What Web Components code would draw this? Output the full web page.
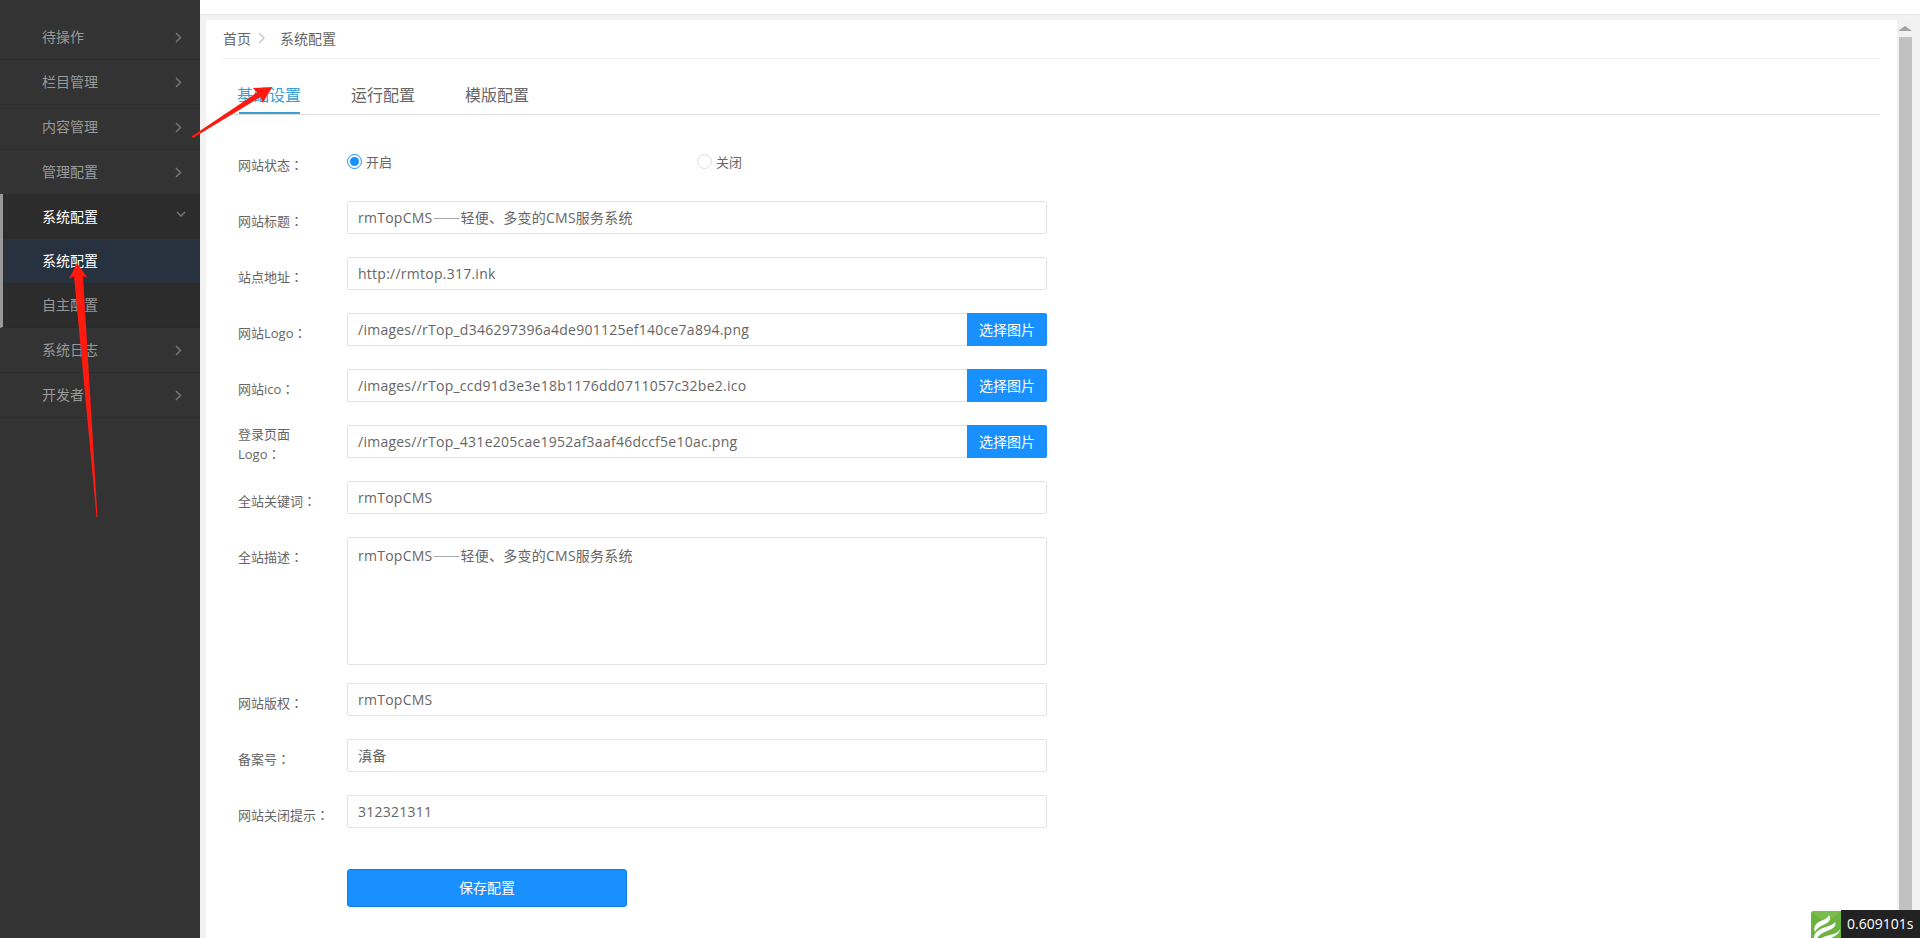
<!DOCTYPE html>
<html lang="zh-CN">
<head>
<meta charset="utf-8">
<title>系统配置</title>
<style>
    html, body { margin: 0; height: 100%; overflow: hidden; background: #f2f2f2; }
    body { font-family: "Open Sans", "Noto Sans CJK SC", sans-serif; color: #666; }
</style>
</head>
<body>
<app-shell>
    <side-nav slot="nav">
        <nav-item label="待操作" chevron="right"></nav-item>
        <nav-item label="栏目管理" chevron="right"></nav-item>
        <nav-item label="内容管理" chevron="right"></nav-item>
        <nav-item label="管理配置" chevron="right"></nav-item>
        <nav-group>
            <nav-item label="系统配置" chevron="down" state="open"></nav-item>
            <nav-item label="系统配置" state="selected"></nav-item>
            <nav-item label="自主配置" state="sub"></nav-item>
        </nav-group>
        <nav-item label="系统日志" chevron="right"></nav-item>
        <nav-item label="开发者" chevron="right"></nav-item>
    </side-nav>

    <config-card>
        <bread-crumb slot="crumb" first="首页" current="系统配置"></bread-crumb>
        <tab-bar slot="tabs" tabs="基础设置,运行配置,模版配置" active="0"></tab-bar>

        <form-row label="网站状态：" kind="radio">
            <radio-option checked>开启</radio-option>
            <radio-option>关闭</radio-option>
        </form-row>
        <form-row label="网站标题："><text-field value="rmTopCMS——轻便、多变的CMS服务系统"></text-field></form-row>
        <form-row label="站点地址："><text-field value="http://rmtop.317.ink"></text-field></form-row>
        <form-row label="网站Logo："><text-field value="/images//rTop_d346297396a4de901125ef140ce7a894.png" action="选择图片"></text-field></form-row>
        <form-row label="网站ico："><text-field value="/images//rTop_ccd91d3e3e18b1176dd0711057c32be2.ico" action="选择图片"></text-field></form-row>
        <form-row label="登录页面|Logo：" kind="wrapped"><text-field value="/images//rTop_431e205cae1952af3aaf46dccf5e10ac.png" action="选择图片"></text-field></form-row>
        <form-row label="全站关键词："><text-field value="rmTopCMS"></text-field></form-row>
        <form-row label="全站描述：" kind="area"><text-field multiline value="rmTopCMS——轻便、多变的CMS服务系统"></text-field></form-row>
        <form-row label="网站版权："><text-field value="rmTopCMS"></text-field></form-row>
        <form-row label="备案号："><text-field value="滇备"></text-field></form-row>
        <form-row label="网站关闭提示："><text-field value="312321311"></text-field></form-row>
        <form-row kind="submit"><save-button>保存配置</save-button></form-row>
    </config-card>
</app-shell>
<annotation-arrows></annotation-arrows>
<timing-badge>0.609101s</timing-badge>

<script>
class AppShell extends HTMLElement {
    constructor() {
        super();
        this.attachShadow({ mode: "open" });
        this.shadowRoot.innerHTML = `
            <style>
                :host { display: flex; width: 1920px; height: 938px; overflow: hidden; }
                .main { flex: 1; min-width: 0; display: flex; flex-direction: column; }
                .top { height: 14px; flex: none; background: #fff; box-shadow: 0 1px 2px rgba(0,0,0,.05); }
                .body { flex: 1; min-height: 0; display: flex; padding: 6px 0 0 6px; }
                .track { flex: none; width: 16px; margin-right: 7px; background: #f1f1f1; display: flex; flex-direction: column; align-items: center; }
                .arrow { flex: none; height: 17px; display: flex; align-items: center; justify-content: center; }
                .arrow i { display: block; width: 0; height: 0; border: 4px solid transparent; border-top: 0; border-left-width: 7px; border-right-width: 7px; border-bottom: 5px solid #a3a3a3; }
                .thumb { flex: 1; width: 13px; margin-left: 1px; background: #c1c1c1; }
            </style>
            <slot name="nav"></slot>
            <div class="main">
                <div class="top"></div>
                <div class="body">
                    <slot></slot>
                    <div class="track"><div class="arrow"><i></i></div><div class="thumb"></div></div>
                </div>
            </div>
        `;
    }
}

class SideNav extends HTMLElement {
    constructor() {
        super();
        this.attachShadow({ mode: "open" });
        this.shadowRoot.innerHTML = `
            <style>
                :host { display: block; flex: none; width: 200px; height: 100%; box-sizing: border-box; padding-top: 15px; background: #333; }
            </style>
            <slot></slot>
        `;
    }
}

class NavGroup extends HTMLElement {
    constructor() {
        super();
        this.attachShadow({ mode: "open" });
        this.shadowRoot.innerHTML = `
            <style>
                :host { display: block; margin-top: -1px; border-left: 3px solid #999; border-bottom: 1px solid #2a2a2a; background: #2c2c2c; }
            </style>
            <slot></slot>
        `;
    }
}

class NavItem extends HTMLElement {
    constructor() {
        super();
        this.attachShadow({ mode: "open" });
    }

    connectedCallback() {
        var state = this.getAttribute("state") || "";
        var chevron = this.getAttribute("chevron");
        var down = chevron === "down";
        var icon = chevron
            ? `<svg width="${down ? 10 : 7}" height="${down ? 6 : 11}" ${down ? 'style="margin-bottom:5px"' : ""} fill="none" stroke="#727272" stroke-width="1.6"><polyline points="${down ? "1,1 5,5 9,1" : "1,1 5.5,5.5 1,10"}"/></svg>`
            : "";
        var grouped = state !== "";
        this.shadowRoot.innerHTML = `
            <style>
                :host { display: block; }
                .row {
                    display: flex; align-items: center; justify-content: space-between;
                    box-sizing: border-box; height: ${grouped && !down ? 44 : 45}px;
                    padding: 0 ${down ? 14 : 18}px 0 ${grouped ? 39 : 42}px;
                    font-size: 14px; color: ${state === "open" || state === "selected" ? "#fff" : "#999"};
                    border-bottom: ${grouped ? 0 : 1}px solid #2d2d2d;
                    background: ${state === "selected" ? "#28323e" : "transparent"};
                }
                span { margin-bottom: 2px; }
            </style>
            <div class="row"><span>${this.getAttribute("label")}</span>${icon}</div>
        `;
    }
}

class ConfigCard extends HTMLElement {
    constructor() {
        super();
        this.attachShadow({ mode: "open" });
        this.shadowRoot.innerHTML = `
            <style>
                :host { display: block; flex: 1; min-width: 0; box-sizing: border-box; padding: 0 17px; background: #fff; border-radius: 3px 0 0 0; }
                .form { padding: 26px 0 0 15px; }
            </style>
            <slot name="crumb"></slot>
            <slot name="tabs"></slot>
            <div class="form"><slot></slot></div>
        `;
    }
}

class BreadCrumb extends HTMLElement {
    constructor() {
        super();
        this.attachShadow({ mode: "open" });
    }

    connectedCallback() {
        this.shadowRoot.innerHTML = `
            <style>
                :host { display: flex; align-items: center; box-sizing: border-box; height: 39px; padding-bottom: 3px; font-size: 14px; color: #666; border-bottom: 1px solid #eee; }
                svg { margin: 0 15px 0 7px; }
            </style>
            <span>${this.getAttribute("first")}</span>
            <svg width="7" height="12" fill="none" stroke="#c8c8c8" stroke-width="1.4"><polyline points="1,1 6,6 1,11"/></svg>
            <span>${this.getAttribute("current")}</span>
        `;
    }
}

class TabBar extends HTMLElement {
    constructor() {
        super();
        this.attachShadow({ mode: "open" });
    }

    connectedCallback() {
        var active = Number(this.getAttribute("active"));
        var tabs = this.getAttribute("tabs").split(",").map(function (name, index) {
            return `<div class="tab${index === active ? " on" : ""}">${name}</div>`;
        });
        this.shadowRoot.innerHTML = `
            <style>
                :host { display: flex; box-sizing: border-box; height: 56px; padding: 18px 0 0 14px; border-bottom: 1px solid #ddd; }
                .tab { margin-right: 50px; width: 64px; height: 37px; line-height: 36px; font-size: 16px; color: #666; }
                .on { color: #3b9fd1; background: linear-gradient(#3b9fd1, #3b9fd1) no-repeat center bottom / 61px 2px; }
            </style>
            ${tabs.join("")}
        `;
    }
}

class FormRow extends HTMLElement {
    constructor() {
        super();
        this.attachShadow({ mode: "open" });
    }

    connectedCallback() {
        var kind = this.getAttribute("kind") || "text";
        var label = this.getAttribute("label") || "";
        var top = { text: 10, radio: 14, wrapped: 0, area: 10, submit: 0 }[kind];
        var bottom = { text: 23, radio: 22, wrapped: 23, area: 18, submit: 0 }[kind];
        // the colon sits centred in its cell in the original, the TC face draws it that way
        var lines = label.split("|").map(function (line) {
            return "<div>" + line.replace("：", '<span class="colon" lang="zh-TW">：</span>') + "</div>";
        });
        this.shadowRoot.innerHTML = `
            <style>
                :host { display: flex; margin-bottom: ${bottom}px; ${kind === "submit" ? "margin-top: 41px;" : ""} }
                .label { flex: none; box-sizing: border-box; width: 109px; height: 33px; padding-top: ${top}px; font-size: 13px; line-height: 19px; color: #666; white-space: nowrap; }
                .colon { font-family: "Noto Sans CJK TC", sans-serif; }
                .control { display: flex; width: 700px; ${kind === "radio" ? "height: 36px; align-items: center; padding-top: 2px;" : ""} }
            </style>
            <div class="label">${lines.join("")}</div>
            <div class="control"><slot></slot></div>
        `;
    }
}

class TextField extends HTMLElement {
    constructor() {
        super();
        this.attachShadow({ mode: "open" });
    }

    connectedCallback() {
        var value = this.getAttribute("value").replace("——", '<span class="dash">——</span>');
        var action = this.getAttribute("action");
        var multiline = this.hasAttribute("multiline");
        this.shadowRoot.innerHTML = `
            <style>
                :host { display: flex; flex: 1; min-width: 0; font-size: 14px; color: #666; }
                .box {
                    flex: 1; min-width: 0; box-sizing: border-box; height: ${multiline ? 128 : 33}px;
                    padding: ${multiline ? "6px" : "0"} 10px; line-height: ${multiline ? "22px" : "31px"};
                    border: 1px solid #e2e2e2; border-radius: ${action ? "2px 0 0 2px" : "2px"};
                    ${action ? "border-right: 0;" : ""} white-space: nowrap; letter-spacing: .25px;
                }
                .dash { font-family: "Noto Sans CJK SC", sans-serif; letter-spacing: 0; }
                .btn {
                    flex: none; width: 80px; height: 33px; line-height: 33px; text-align: center;
                    font-size: 14px; color: #fff; background: #1890ff; border-radius: 0 2px 2px 0;
                }
            </style>
            <div class="box">${value}</div>
            ${action ? `<div class="btn">${action}</div>` : ""}
        `;
    }
}

class RadioOption extends HTMLElement {
    constructor() {
        super();
        this.attachShadow({ mode: "open" });
    }

    connectedCallback() {
        var checked = this.hasAttribute("checked");
        this.shadowRoot.innerHTML = `
            <style>
                :host { display: flex; align-items: center; flex: none; width: 350px; font-size: 13px; color: #666; }
                .dot { box-sizing: border-box; width: 15px; height: 15px; margin-right: 4px; border-radius: 50%; border: 1px solid ${checked ? "#1890ff" : "#ddd"}; padding: 2px; }
                .dot i { display: block; width: 9px; height: 9px; border-radius: 50%; background: ${checked ? "#1890ff" : "transparent"}; }
            </style>
            <span class="dot"><i></i></span><slot></slot>
        `;
    }
}

class SaveButton extends HTMLElement {
    constructor() {
        super();
        this.attachShadow({ mode: "open" });
        this.shadowRoot.innerHTML = `
            <style>
                :host { display: block; box-sizing: border-box; width: 280px; height: 38px; line-height: 36px; text-align: center; font-size: 14px; color: #fff; background: #1890ff; border: 1px solid #0f7fe6; border-radius: 3px; }
            </style>
            <slot></slot>
        `;
    }
}

class AnnotationArrows extends HTMLElement {
    constructor() {
        super();
        this.attachShadow({ mode: "open" });
        this.shadowRoot.innerHTML = `
            <style>
                :host { position: absolute; left: 0; top: 0; width: 300px; height: 530px; pointer-events: none; }
            </style>
            <svg width="300" height="530" fill="#ff1a10">
                <polygon points="191.5,136.5 257,92.5 253,88 272.5,87 262.5,103 260.5,97 193,138"/>
                <polygon points="77,263 87.5,278 83,276 97.5,517 96.5,517 74,276 69,279"/>
            </svg>
        `;
    }
}

class TimingBadge extends HTMLElement {
    constructor() {
        super();
        this.attachShadow({ mode: "open" });
        this.shadowRoot.innerHTML = `
            <style>
                :host { position: absolute; right: 0; bottom: 0; display: flex; align-items: flex-end; height: 28px; font-size: 14px; color: #fff; }
                .logo { width: 30px; height: 27px; border-radius: 3px 0 0 0; }
                .time { box-sizing: border-box; width: 79px; height: 28px; line-height: 27px; padding-left: 6px; background: #222; font-family: "Open Sans", sans-serif; }
            </style>
            <svg class="logo" viewBox="0 0 30 27">
                <rect width="30" height="27" fill="#6db33f"/>
                <polygon points="0,0 15,13 30,0" fill="#79bd4c"/>
                <path fill="#fff" d="M18 4C21 9 17 12 12 14C8 16 5 18 4 21C2 16 5 12 10 10C14 8 17 7 18 4Z"/>
                <path fill="#fff" d="M24 11C26 15 22 18 16 20C11 22 8 24 6 27H3C3 22 7 19 12 17C17 15 22 14 24 11Z"/>
                <path fill="#fff" d="M29 18C29 22 25 25 20 27H11C15 24 21 24 25 22C27 21 28 20 29 18Z"/>
            </svg>
            <div class="time"><slot></slot></div>
        `;
    }
}

customElements.define("app-shell", AppShell);
customElements.define("side-nav", SideNav);
customElements.define("nav-group", NavGroup);
customElements.define("nav-item", NavItem);
customElements.define("config-card", ConfigCard);
customElements.define("bread-crumb", BreadCrumb);
customElements.define("tab-bar", TabBar);
customElements.define("form-row", FormRow);
customElements.define("text-field", TextField);
customElements.define("radio-option", RadioOption);
customElements.define("save-button", SaveButton);
customElements.define("annotation-arrows", AnnotationArrows);
customElements.define("timing-badge", TimingBadge);
</script>
</body>
</html>
